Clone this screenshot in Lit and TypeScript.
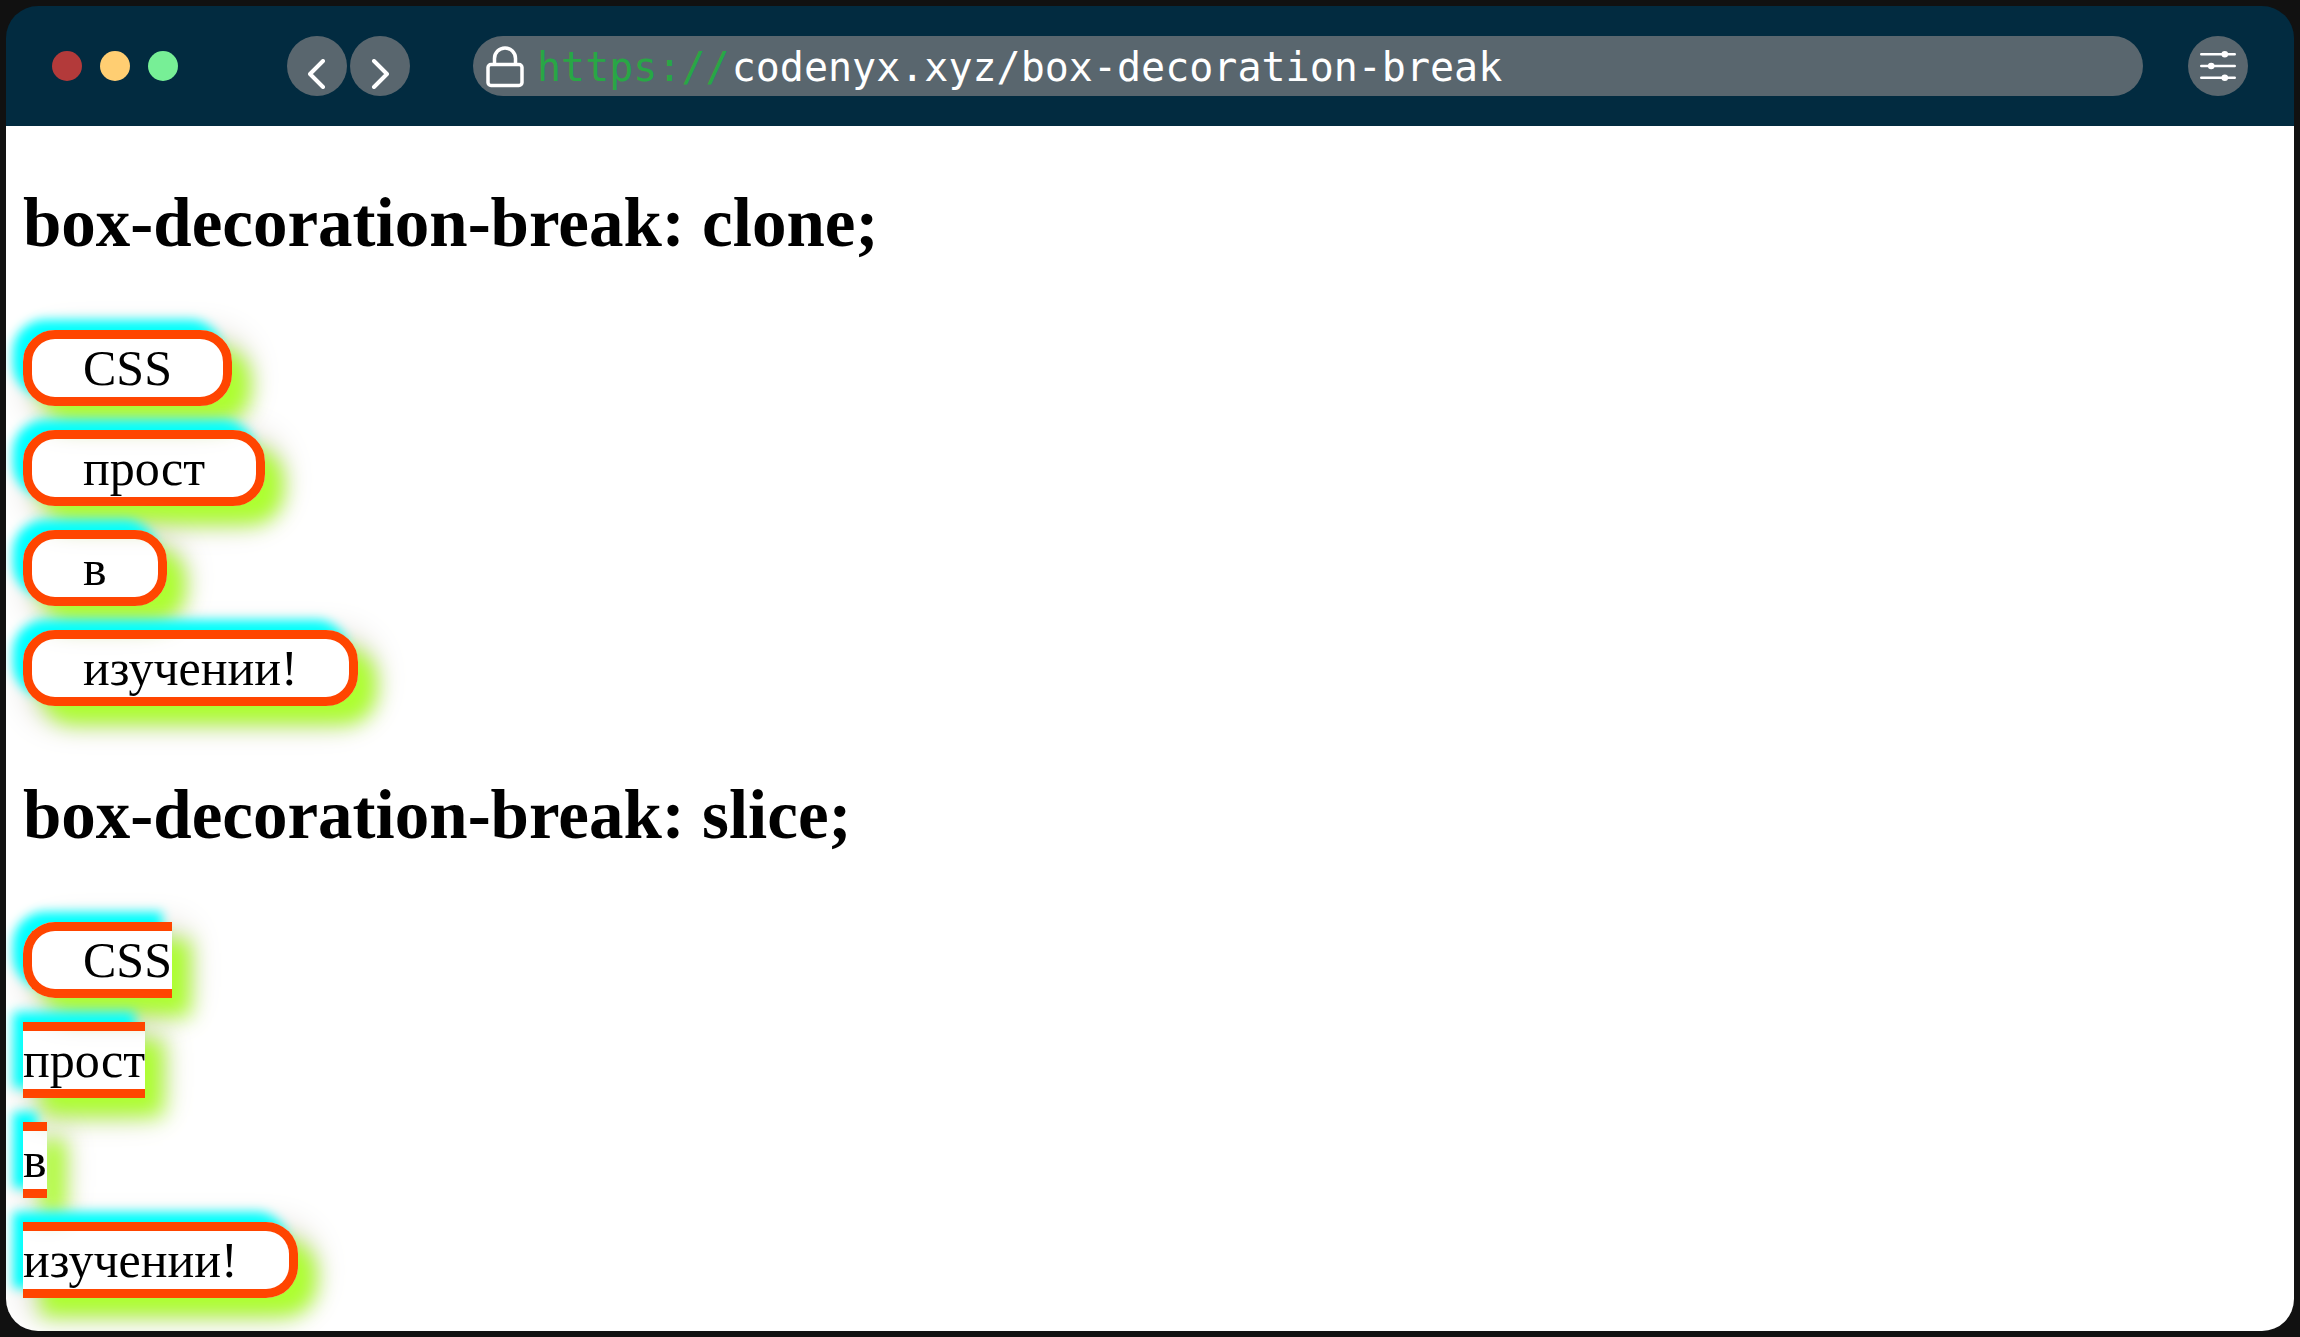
import { LitElement, html, css, svg } from "lit";
import { customElement, property } from "lit/decorators.js";

const WORDS = ["CSS", "прост", "в", "изучении!"];

const lockIcon = svg`<svg class="lock" viewBox="0 0 38 42" aria-hidden="true">
  <rect x="2" y="18.500" width="34" height="21" rx="3"></rect>
  <path d="M8.500 18V12.500a10.500 10.500 0 0 1 21 0V18"></path>
</svg>`;

const slidersIcon = svg`<svg class="sliders" viewBox="0 0 36 30" aria-hidden="true">
  <path d="M1.300 3.300H34.700M1.300 15H34.700M1.300 26.700H34.700"></path>
  <circle cx="24.800" cy="3.300" r="3.300"></circle>
  <circle cx="11.200" cy="15" r="3.300"></circle>
  <circle cx="24.800" cy="26.700" r="3.300"></circle>
</svg>`;

@customElement("browser-bar")
export class BrowserBar extends LitElement {
  @property() scheme = "https://";
  @property() address = "";

  static styles = css`
    :host {
      display: flex;
      align-items: center;
      height: 120px;
      padding: 0 46px;
      box-sizing: border-box;
      background: #022b40;
    }
    .lights {
      display: flex;
      gap: 18px;
      margin-right: 109px;
    }
    .light {
      width: 30px;
      height: 30px;
      padding: 0;
      border: 0;
      border-radius: 50%;
    }
    .close {
      background: #b33a3a;
    }
    .minimise {
      background: #ffce72;
    }
    .maximise {
      background: #77ef96;
    }
    .nav {
      display: flex;
      gap: 3px;
      margin-right: 63px;
    }
    .round {
      display: flex;
      align-items: center;
      justify-content: center;
      flex: none;
      width: 60px;
      height: 60px;
      padding: 0;
      border: 0;
      border-radius: 50%;
      background: #59666e;
    }
    .nav .round {
      padding-top: 16px;
    }
    svg {
      display: block;
      flex: none;
      fill: none;
      stroke: #fff;
      stroke-linecap: round;
      stroke-linejoin: round;
    }
    .chevron {
      width: 18px;
      height: 30px;
      stroke-width: 4;
    }
    .field {
      display: flex;
      align-items: center;
      flex: 1;
      min-width: 0;
      height: 60px;
      margin-right: 45px;
      padding: 2px 24px 0 13px;
      box-sizing: border-box;
      border-radius: 30px;
      background: #59666e;
      font: 40px/58px "DejaVu Sans Mono", monospace;
    }
    .lock {
      width: 38px;
      height: 42px;
      margin-right: 13px;
      stroke-width: 3.500;
    }
    .scheme {
      margin-right: 2px;
      color: #28a745;
    }
    .url {
      flex: 1;
      min-width: 0;
      padding: 0;
      border: 0;
      outline: 0;
      background: none;
      color: #fff;
      font: inherit;
    }
    .sliders {
      width: 36px;
      height: 30px;
      stroke-width: 2.600;
    }
    .sliders circle {
      fill: #fff;
      stroke: none;
    }
  `;

  render() {
    return html`
      <div class="lights">
        <button class="light close" aria-label="Close"></button>
        <button class="light minimise" aria-label="Minimise"></button>
        <button class="light maximise" aria-label="Maximise"></button>
      </div>
      <nav class="nav">
        <button class="round" aria-label="Back">
          <svg class="chevron" viewBox="0 0 18 30"><path d="M15 2L2 15L15 28"></path></svg>
        </button>
        <button class="round" aria-label="Forward">
          <svg class="chevron" viewBox="0 0 18 30"><path d="M3 2L16 15L3 28"></path></svg>
        </button>
      </nav>
      <label class="field">
        ${lockIcon}
        <span class="scheme">${this.scheme}</span>
        <input class="url" type="text" spellcheck="false" aria-label="Address" .value=${this.address} />
      </label>
      <button class="round" aria-label="Settings">${slidersIcon}</button>
    `;
  }
}

@customElement("break-demo")
export class BreakDemo extends LitElement {
  @property() mode: "clone" | "slice" = "slice";

  static styles = css`
    :host {
      display: block;
      padding: 57px 17px 0;
      font-family: "Liberation Serif", serif;
      color: #000;
    }
    .title {
      margin: 0 0 55px;
      font-size: 69px;
      line-height: 80px;
      font-weight: bold;
    }
    .text {
      margin: 0;
      font-size: 50px;
      line-height: 100px;
    }
    .box {
      padding: 1px 51px;
      border: 9px solid #ff4500;
      border-radius: 32px;
      box-shadow:
        18px 18px 20px 0 #adff2f,
        -10px -10px 11px 0 #00ffff,
        10px 10px 38px 0 #c4c0b8;
    }
    /* A sliced box keeps its side edges on the first and last line only. */
    .slice:not(:first-child) {
      padding-left: 0;
      border-left: 0;
      border-top-left-radius: 0;
      border-bottom-left-radius: 0;
    }
    .slice:not(:last-child) {
      padding-right: 0;
      border-right: 0;
      border-top-right-radius: 0;
      border-bottom-right-radius: 0;
    }
  `;

  render() {
    return html`
      <h2 class="title">box-decoration-break: ${this.mode};</h2>
      <p class="text">
        ${WORDS.map((word, i) => html`${i ? html`<br />` : ""}<span class="box ${this.mode}">${word}</span>`)}
      </p>
    `;
  }
}

@customElement("app-root")
export class AppRoot extends LitElement {
  static styles = css`
    :host {
      display: flex;
      min-height: 100vh;
      padding: 6px;
      box-sizing: border-box;
      background: #111;
    }
    .window {
      display: flex;
      flex-direction: column;
      flex: 1;
      min-width: 0;
      overflow: hidden;
      border-radius: 32px;
    }
    .page {
      flex: 1;
      background: #fff;
    }
  `;

  render() {
    return html`
      <div class="window">
        <browser-bar address="codenyx.xyz/box-decoration-break"></browser-bar>
        <main class="page">
          <break-demo mode="clone"></break-demo>
          <break-demo mode="slice"></break-demo>
        </main>
      </div>
    `;
  }
}
